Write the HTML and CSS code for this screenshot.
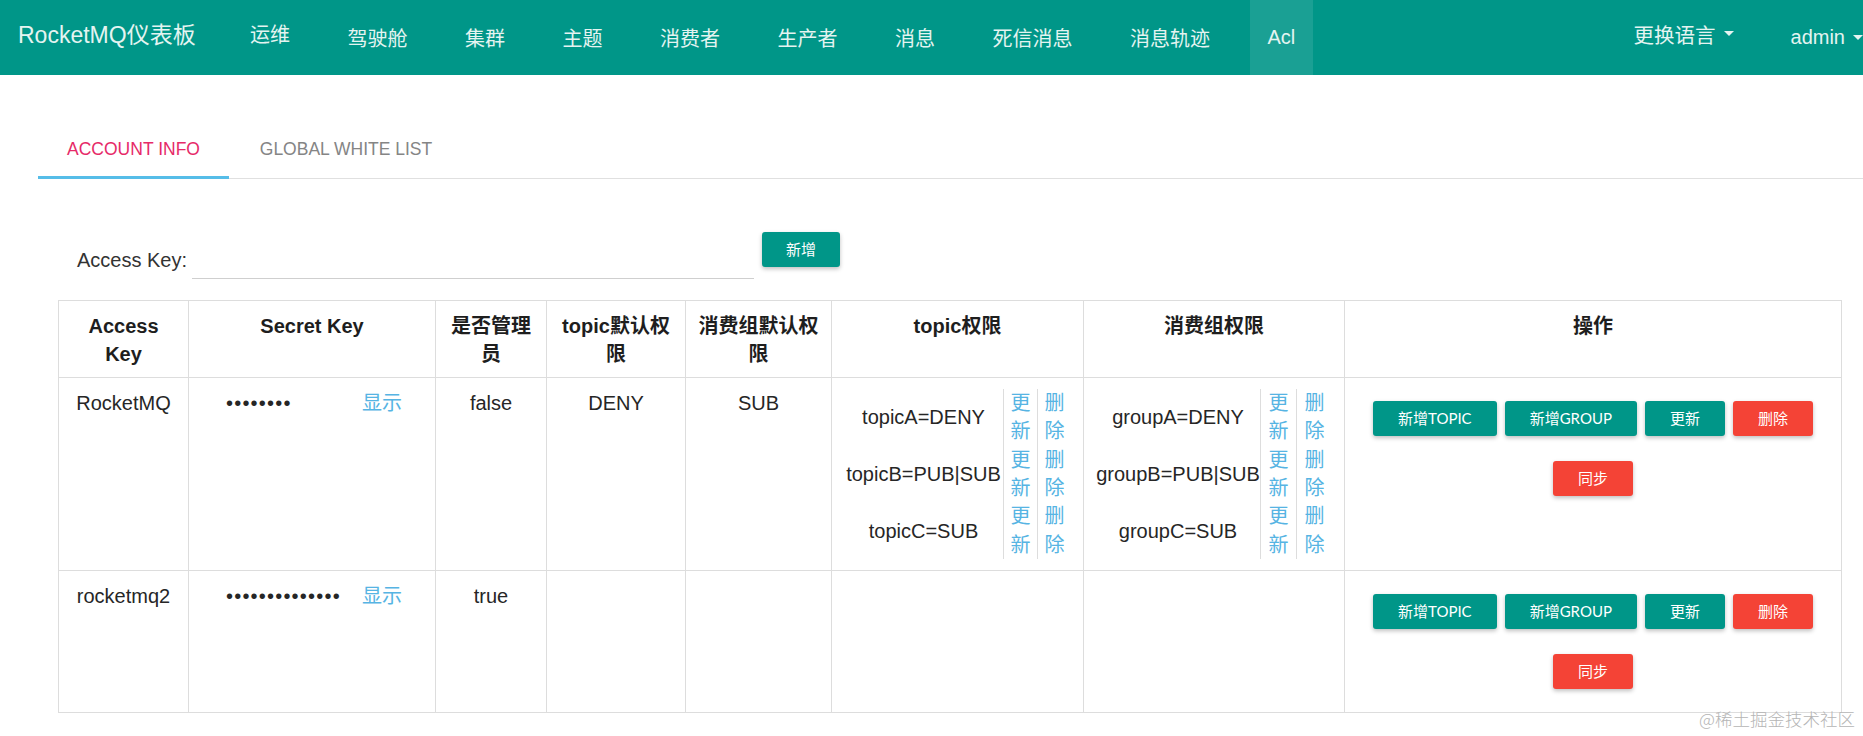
FILE: index.html
```html
<!DOCTYPE html>
<html lang="zh">
<head>
<meta charset="utf-8">
<title>RocketMQ仪表板</title>
<link rel="stylesheet" href="styles.css">
</head>
<body>
<nav class="navbar">
  <div class="brand">RocketMQ仪表板</div>
  <ul class="nav">
    <li><a class="raised">运维</a></li>
    <li><a>驾驶舱</a></li>
    <li><a>集群</a></li>
    <li><a>主题</a></li>
    <li><a>消费者</a></li>
    <li><a>生产者</a></li>
    <li><a>消息</a></li>
    <li><a>死信消息</a></li>
    <li><a>消息轨迹</a></li>
    <li class="active"><a>Acl</a></li>
  </ul>
  <ul class="nav nav-right">
    <li><a class="raised">更换语言<span class="caret"></span></a></li>
    <li class="last"><a>admin<span class="caret"></span></a></li>
  </ul>
</nav>

<main class="content">
  <ul class="tabs">
    <li class="tab tab-account active">ACCOUNT INFO</li>
    <li class="tab tab-white">GLOBAL WHITE LIST</li>
  </ul>

  <div class="search-row">
    <label class="search-label">Access Key:</label>
    <input class="key-input" type="text">
    <button class="btn btn-add">新增</button>
  </div>

  <table class="acl-table">
    <colgroup>
      <col class="c-key"><col class="c-secret"><col class="c-admin"><col class="c-tdef"><col class="c-gdef"><col class="c-tperm"><col class="c-gperm"><col class="c-ops">
    </colgroup>
    <thead>
      <tr>
        <th>Access Key</th>
        <th>Secret Key</th>
        <th>是否管理员</th>
        <th>topic默认权限</th>
        <th>消费组默认权限</th>
        <th>topic权限</th>
        <th>消费组权限</th>
        <th>操作</th>
      </tr>
    </thead>
    <tbody>
      <tr>
        <td>RocketMQ</td>
        <td class="secret"><span class="dots">••••••••</span><a class="link">显示</a></td>
        <td>false</td>
        <td>DENY</td>
        <td>SUB</td>
        <td>
          <div class="perm">
            <div class="name">topicA=DENY</div><a class="op link">更新</a><a class="op link">删除</a>
            <div class="name">topicB=PUB|SUB</div><a class="op link">更新</a><a class="op link">删除</a>
            <div class="name">topicC=SUB</div><a class="op link">更新</a><a class="op link">删除</a>
          </div>
        </td>
        <td>
          <div class="perm perm-group">
            <div class="name">groupA=DENY</div><a class="op link">更新</a><a class="op link">删除</a>
            <div class="name">groupB=PUB|SUB</div><a class="op link">更新</a><a class="op link">删除</a>
            <div class="name">groupC=SUB</div><a class="op link">更新</a><a class="op link">删除</a>
          </div>
        </td>
        <td>
          <div class="ops">
            <button class="btn">新增TOPIC</button>
            <button class="btn">新增GROUP</button>
            <button class="btn">更新</button>
            <button class="btn btn-red">删除</button>
            <button class="btn btn-red">同步</button>
          </div>
        </td>
      </tr>
      <tr>
        <td>rocketmq2</td>
        <td class="secret"><span class="dots">••••••••••••••</span><a class="link">显示</a></td>
        <td>true</td>
        <td></td>
        <td></td>
        <td></td>
        <td></td>
        <td>
          <div class="ops">
            <button class="btn">新增TOPIC</button>
            <button class="btn">新增GROUP</button>
            <button class="btn">更新</button>
            <button class="btn btn-red">删除</button>
            <button class="btn btn-red">同步</button>
          </div>
        </td>
      </tr>
    </tbody>
  </table>
</main>

<div class="watermark">@稀土掘金技术社区</div>
</body>
</html>
```

FILE: styles.css
```css
* {
  box-sizing: border-box;
}

html, body {
  margin: 0;
  padding: 0;
}

body {
  position: relative;
  width: 1863px;
  height: 736px;
  overflow: hidden;
  background: #ffffff;
  color: #222222;
  font-family: "Liberation Sans", "Noto Sans CJK SC", sans-serif;
}

/* ---------- navbar ---------- */
.navbar {
  display: flex;
  height: 75px;
  background: #009688;
  color: #e4f4f1;
}

.brand {
  width: 232px;
  padding-left: 18px;
  padding-bottom: 9px;
  display: flex;
  align-items: center;
  font-size: 23px;
  white-space: nowrap;
}

.nav {
  display: flex;
  gap: 21.5px;
  list-style: none;
  margin: 0;
  padding: 0;
}

.nav a {
  display: flex;
  align-items: center;
  height: 75px;
  padding: 0 18px;
  font-size: 20px;
  white-space: nowrap;
  cursor: pointer;
}

.nav a.raised {
  padding-bottom: 8px;
}

.nav .active a {
  background: rgba(255, 255, 255, 0.1);
}

.nav-right {
  margin-left: auto;
  gap: 21px;
}

.nav-right .raised {
  font-size: 20.5px;
}

.nav-right .last a {
  padding-right: 0;
  font-size: 20px;
}

.caret {
  display: inline-block;
  width: 0;
  height: 0;
  margin-left: 8px;
  border-left: 5px solid transparent;
  border-right: 5px solid transparent;
  border-top: 5px solid #e4f4f1;
}

/* ---------- content ---------- */
.content {
  padding-left: 38px;
}

.tabs {
  display: flex;
  list-style: none;
  margin: 44px 0 0;
  padding: 0;
  height: 60px;
  border-bottom: 1px solid #e0e0e0;
}

.tab {
  display: flex;
  align-items: center;
  justify-content: center;
  height: 60px;
  margin-bottom: -1px;
  padding-top: 3px;
  border-bottom: 3px solid transparent;
  font-size: 17.5px;
  color: #858585;
  white-space: nowrap;
}

.tab-account {
  width: 191px;
}

.tab-white {
  width: 234px;
}

.tab.active {
  color: #e62a68;
  border-bottom-color: #56bde8;
}

.search-row {
  display: flex;
  align-items: flex-start;
  height: 48px;
  margin-top: 53px;
  padding-left: 39px;
}

.search-label {
  width: 115px;
  margin-top: 14px;
  line-height: 28px;
  font-size: 20px;
  color: #333333;
  white-space: nowrap;
}

.key-input {
  width: 562px;
  height: 36px;
  margin-top: 11px;
  border: none;
  border-bottom: 1px solid #cfcfcf;
  outline: none;
  background: transparent;
  font-size: 19px;
}

.btn {
  height: 35px;
  padding: 0 25px;
  border: none;
  border-radius: 3px;
  background: #009688;
  color: #ffffff;
  font-family: "Lato", "Noto Sans CJK SC", sans-serif;
  font-size: 15px;
  line-height: 35px;
  white-space: nowrap;
  box-shadow: 0 2px 4px rgba(0, 0, 0, 0.25);
  cursor: pointer;
}

.btn-add {
  width: 78px;
  padding: 0;
  margin-left: 8px;
}

.btn-red {
  background: #f44336;
}

/* ---------- table ---------- */
.acl-table {
  width: 1783px;
  margin: 20px 0 0 20px;
  border-collapse: collapse;
  table-layout: fixed;
  font-size: 20px;
  line-height: 28.4px;
}

.c-key { width: 130px; }
.c-secret { width: 247px; }
.c-admin { width: 111px; }
.c-tdef { width: 139px; }
.c-gdef { width: 146px; }
.c-tperm { width: 252px; }
.c-gperm { width: 261px; }
.c-ops { width: 497px; }

.acl-table th,
.acl-table td {
  padding: 11px 12px;
  border: 1px solid #dddddd;
  vertical-align: top;
  text-align: center;
}

.acl-table th {
  padding-bottom: 8px;
  font-weight: bold;
  color: #1e1e1e;
}

.acl-table td {
  color: #262626;
}

.acl-table td.secret {
  text-align: left;
  padding-left: 37px;
  white-space: nowrap;
}

.dots {
  display: inline-block;
  width: 136px;
  letter-spacing: 1.2px;
}

.link {
  color: #56b4e3;
  cursor: pointer;
}

.perm {
  display: grid;
  grid-template-columns: 1fr 34px 34px;
}

.perm-group {
  grid-template-columns: 1fr 36px 36px;
}

.perm .name {
  display: flex;
  align-items: center;
  justify-content: center;
  white-space: nowrap;
}

.perm .op {
  padding: 0 6px;
  border-left: 1px solid #dddddd;
  text-align: center;
}

.ops {
  display: flex;
  flex-wrap: wrap;
  justify-content: center;
  gap: 25px 8px;
  margin: 12px 0;
}

/* ---------- watermark ---------- */
.watermark {
  position: absolute;
  right: 8px;
  bottom: 5px;
  font-size: 17.5px;
  color: #b5b5b5;
  font-family: "Noto Sans CJK SC", sans-serif;
  font-weight: 300;
}
```
